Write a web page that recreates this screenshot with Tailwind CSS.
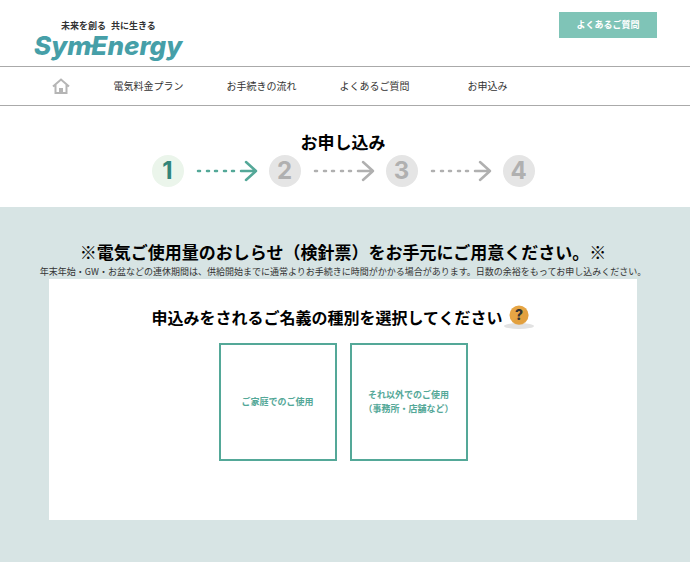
<!DOCTYPE html>
<html lang="ja">
<head>
    <meta charset="UTF-8">
    <meta name="viewport" content="width=device-width, initial-scale=1.0">
    <title>お申し込み | SymEnergy</title>
    <script src="https://cdn.jsdelivr.net/npm/@tailwindcss/browser@4"></script>
</head>
<body class="bg-white text-black font-['Noto_Sans_CJK_JP',sans-serif] flex flex-col min-h-screen">
    <header class="flex justify-between items-start h-[66px] pl-8 pr-[33px]">
        <a href="#" class="block pt-[21px]" aria-label="SymEnergy">
            <span class="flex gap-[5px] pl-[29px] text-[9px] leading-[10px] font-bold text-[#333]">
                <span>未来を創る</span>
                <span>共に生きる</span>
            </span>
            <svg width="160" height="34" viewBox="0 0 160 34" class="block overflow-visible">
                <text x="2" y="24" font-family="Inter, sans-serif" font-size="26" font-weight="800" font-style="italic" fill="#469fa8">SymEnergy</text>
                <path d="M56 15h10" stroke="#469fa8" stroke-width="3"/>
            </svg>
        </a>
        <button class="mt-3 w-[98px] h-[26px] bg-[#7fc4b7] text-white text-[9px] font-bold">よくあるご質問</button>
    </header>

    <nav class="flex items-center h-10 border-y border-[#aaa] text-[10px] text-[#333]">
        <a href="#" class="block w-[92px] pl-[52px]" aria-label="ホーム">
            <svg width="18" height="16" viewBox="0 0 18 16" fill="none" stroke="#b5b5b5" stroke-width="2">
                <path d="M1 8.5L9 1.5l8 7M3.5 7v8h11V7"/>
                <path d="M7 10h4v5H7z" fill="#b5b5b5" stroke="none"/>
            </svg>
        </a>
        <a href="#" class="w-[113px] pb-0.5 text-center">電気料金プラン</a>
        <a href="#" class="w-[113px] pb-0.5 text-center">お手続きの流れ</a>
        <a href="#" class="w-[113px] pb-0.5 text-center">よくあるご質問</a>
        <a href="#" class="w-[113px] pb-0.5 text-center">お申込み</a>
    </nav>

    <section class="pt-6 pb-5 pr-1">
        <h1 class="text-[17px] leading-6 font-bold text-center">お申し込み</h1>
        <ol class="flex justify-center items-center font-['Inter',sans-serif] text-2xl font-bold text-[#b0b0b0] pt-px">
            <li class="flex items-center justify-center size-8 rounded-full bg-[#ebf5eb] text-[#328579]">1</li>
            <li class="flex items-center" aria-hidden="true">
                <svg width="85" height="24" viewBox="0 0 85 24" fill="none" stroke="#54a898" stroke-width="2.5" stroke-linecap="round" stroke-linejoin="round">
                    <path d="M14 12h2M23 12h2M31 12h2M40 12h2M48 12h2M57 12h15M62 3l10 9-10 9"/>
                </svg>
            </li>
            <li class="flex items-center justify-center size-8 rounded-full bg-[#e5e5e5]">2</li>
            <li class="flex items-center" aria-hidden="true">
                <svg width="85" height="24" viewBox="0 0 85 24" fill="none" stroke="#b0b0b0" stroke-width="2.5" stroke-linecap="round" stroke-linejoin="round">
                    <path d="M14 12h2M23 12h2M31 12h2M40 12h2M48 12h2M57 12h15M62 3l10 9-10 9"/>
                </svg>
            </li>
            <li class="flex items-center justify-center size-8 rounded-full bg-[#e5e5e5]">3</li>
            <li class="flex items-center" aria-hidden="true">
                <svg width="85" height="24" viewBox="0 0 85 24" fill="none" stroke="#b0b0b0" stroke-width="2.5" stroke-linecap="round" stroke-linejoin="round">
                    <path d="M14 12h2M23 12h2M31 12h2M40 12h2M48 12h2M57 12h15M62 3l10 9-10 9"/>
                </svg>
            </li>
            <li class="flex items-center justify-center size-8 rounded-full bg-[#e5e5e5]">4</li>
        </ol>
    </section>

    <main class="grow bg-[#d7e4e4] pt-[33px] pb-10 pr-1 text-center">
        <h2 class="text-[17px] leading-6 font-bold">※電気ご使用量のおしらせ（検針票）をお手元にご用意ください。※</h2>
        <p class="text-[9px] leading-[15px] text-[#333]">年末年始・GW・お盆などの連休期間は、供給開始までに通常よりお手続きに時間がかかる場合があります。日数の余裕をもってお申し込みください。</p>

        <div class="w-6/7 mx-auto bg-white pt-[26px] pb-[59px]">
            <div class="flex justify-center items-center">
                <h3 class="text-base leading-6 font-bold">申込みをされるご名義の種別を選択してください</h3>
                <button aria-label="ヘルプ">
                    <svg width="32" height="24" viewBox="0 0 32 24">
                        <ellipse cx="16" cy="21" rx="15" ry="3" fill="#e2e2e2"/>
                        <circle cx="16" cy="10" r="9.5" fill="#e6a544"/>
                        <path d="M9 17a9.500 9.500 0 0 0 14-13z" fill="#dc9838" opacity=".4"/>
                        <text x="16" y="15" text-anchor="middle" font-family="Inter, sans-serif" font-size="14" font-weight="800" fill="#333">?</text>
                    </svg>
                </button>
            </div>
            <div class="flex justify-center gap-[13px] pt-3.5">
                <button class="size-[118px] border-2 border-[#54a898] bg-white text-[#54a898] text-[9px] leading-3.5 font-bold">ご家庭でのご使用</button>
                <button class="size-[118px] border-2 border-[#54a898] bg-white text-[#54a898] text-[9px] leading-3.5 font-bold">それ以外でのご使用<br>（事務所・店舗など）</button>
            </div>
        </div>
    </main>
</body>
</html>
